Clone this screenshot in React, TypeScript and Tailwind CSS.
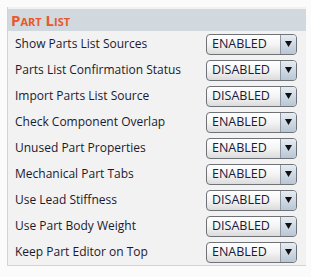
import React from "react";

const rows: [string, string][] = [
  ["Show Parts List Sources", "ENABLED"],
  ["Parts List Confirmation Status", "DISABLED"],
  ["Import Parts List Source", "DISABLED"],
  ["Check Component Overlap", "ENABLED"],
  ["Unused Part Properties", "ENABLED"],
  ["Mechanical Part Tabs", "ENABLED"],
  ["Use Lead Stiffness", "DISABLED"],
  ["Use Part Body Weight", "DISABLED"],
  ["Keep Part Editor on Top", "ENABLED"],
];

function Select({ value }: { value: string }) {
  return (
    <div className="flex h-[21px] w-[91px] overflow-hidden rounded-[4px] border border-[#6f7378] bg-gradient-to-b from-[#ffffff] via-[#f4f4f4] to-[#dcdcdc]">
      <div className="flex flex-1 items-center pl-[5px] text-[12.5px] leading-none text-[#15203a]">
        {value}
      </div>
      <div className="flex w-[16px] items-center justify-center border-l border-[#8f98a3] bg-gradient-to-b from-[#e6ecf2] to-[#b8c6d5]">
        <svg width="7" height="6" viewBox="0 0 7 6">
          <polygon points="0,0 7,0 3.5,6" fill="#111" />
        </svg>
      </div>
    </div>
  );
}

export default function App() {
  return (
    <div
      className="h-[277px] w-[311px] bg-[#fbfbfb] pt-[7px] pl-[7px]"
      style={{ fontFamily: "'Open Sans', 'Noto Sans', sans-serif" }}
    >
      <div className="w-[299px] border-b border-l border-[#d4d4d4] bg-[#f2f2f2] pt-[2px]">
        <div className="flex h-[22px] items-center bg-[#d2d9de] pl-[3px]">
          <span
            className="text-[15px] font-bold leading-none text-[#e9572b]"
            style={{ fontVariant: "small-caps" }}
          >
            Part List
          </span>
        </div>
        <div className="flex flex-col">
          {rows.map(([label, value]) => (
            <div key={label} className="flex h-[26px] items-center justify-between pl-[7px] pr-[9px]">
              <span className="text-[12px] text-[#1a1a2e]">{label}</span>
              <Select value={value} />
            </div>
          ))}
        </div>
      </div>
    </div>
  );
}
